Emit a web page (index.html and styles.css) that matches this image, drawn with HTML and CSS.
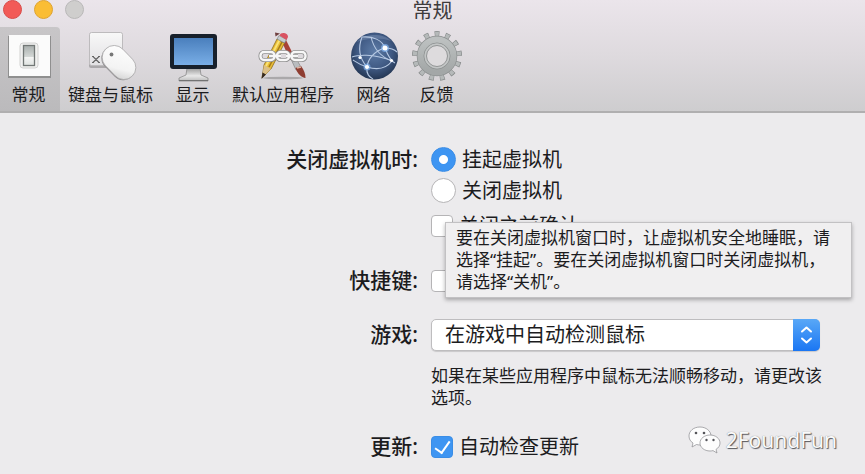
FILE: index.html
```html
<!DOCTYPE html>
<html lang="zh-CN">
<head>
<meta charset="utf-8">
<meta name="viewport" content="width=device-width, initial-scale=1">
<title>常规</title>
<link rel="stylesheet" href="styles.css">
</head>
<body>
<header class="header">
  <div class="titlebar">
    <div class="lights">
      <button class="light light-close" type="button" aria-label="关闭"></button>
      <button class="light light-min" type="button" aria-label="最小化"></button>
      <button class="light light-zoom" type="button" aria-label="缩放" disabled></button>
    </div>
    <h1 class="title">常规</h1>
  </div>
  <nav class="toolbar">
    <button class="tool tool-selected" type="button">
      <svg class="tool-icon" viewBox="0 0 52 52" aria-hidden="true">
        <defs>
          <linearGradient id="rocker" x1="0" y1="0" x2="0" y2="1"><stop offset="0" stop-color="#a9afae"/><stop offset=".55" stop-color="#d3d7d5"/><stop offset=".6" stop-color="#f4f5f4"/><stop offset="1" stop-color="#dfe2e0"/></linearGradient>
        </defs>
        <rect x="5" y="6" width="43" height="42" fill="#8f8f8f"/>
        <rect x="6" y="5" width="41" height="41" fill="#fbfbfb"/>
        <rect x="17" y="13" width="18" height="25" rx="3" fill="#f1f1f0" stroke="#d2d2d1"/>
        <rect x="20.500" y="15.500" width="11" height="20" fill="url(#rocker)" stroke="#727776" stroke-width="1.300"/>
      </svg>
      <span>常规</span>
    </button>
    <button class="tool" type="button">
      <svg class="tool-icon" viewBox="0 0 52 52" aria-hidden="true">
        <defs>
          <linearGradient id="key" x1="0" y1="0" x2="0" y2="1"><stop offset="0" stop-color="#f8f8f8"/><stop offset="1" stop-color="#e2e1e3"/></linearGradient>
          <linearGradient id="mouse" x1="0" y1="0" x2="1" y2="1"><stop offset="0" stop-color="#ffffff"/><stop offset=".65" stop-color="#f3f3f3"/><stop offset="1" stop-color="#c9c9c9"/></linearGradient>
        </defs>
        <rect x="4" y="4" width="34" height="34" rx="2" fill="#aaa8aa"/>
        <rect x="4.500" y="2.500" width="33" height="33" rx="2" fill="url(#key)" stroke="#bdbbbd"/>
        <path d="M8 26.500l6 6M14 26.500l-6 6M7 26.500h2M13 26.500h2M7 32.500h2M13 32.500h2" stroke="#686868" stroke-width="1.200" fill="none"/>
        <g transform="rotate(46 34 32.500)">
          <rect x="15" y="21.500" width="38" height="24" rx="12" fill="#8d8b8d"/>
          <rect x="15" y="20.500" width="38" height="24" rx="12" fill="url(#mouse)" stroke="#aaa9aa" stroke-width=".8"/>
        </g>
        <circle cx="26.500" cy="24.500" r="1.900" fill="#777"/>
      </svg>
      <span>键盘与鼠标</span>
    </button>
    <button class="tool" type="button">
      <svg class="tool-icon" viewBox="0 0 52 52" aria-hidden="true">
        <defs>
          <linearGradient id="screen" x1="0" y1="0" x2="0" y2="1"><stop offset="0" stop-color="#4a7fbd"/><stop offset="1" stop-color="#79aee6"/></linearGradient>
          <linearGradient id="stand" x1="0" y1="0" x2="0" y2="1"><stop offset="0" stop-color="#999"/><stop offset=".6" stop-color="#e8e8e8"/><stop offset="1" stop-color="#bbb"/></linearGradient>
        </defs>
        <path d="M20 38h13l1 7 7 3v3H12v-3l7-3z" fill="url(#stand)" stroke="#8b8b8b" stroke-width=".8"/>
        <path d="M12 50.500h29" stroke="#737373"/>
        <rect x="3" y="4" width="47" height="35" rx="3" fill="#17202b"/>
        <rect x="7" y="8" width="39" height="27" fill="url(#screen)"/>
      </svg>
      <span>显示</span>
    </button>
    <button class="tool" type="button">
      <svg class="tool-icon" viewBox="0 0 52 52" aria-hidden="true">
        <ellipse cx="26" cy="48" rx="20" ry="1.300" fill="#aaa8aa"/>
        <path d="M25 12l4-2 9 18-5 2z" fill="#a84238"/>
        <path d="M33 27l4-2 7 12-5 3z" fill="#b9bcbf" stroke="#777" stroke-width=".6"/>
        <path d="M38.500 38l5.500-2c3 4 4.500 8 4.500 12-4-.5-8-4-10-10z" fill="#8f3d31"/>
        <path d="M40 38l4-1" stroke="#deb6a5" stroke-width="1.500"/>
        <path d="M7 35L20 9l7.500 4L14 39 5 48z" fill="#e9bd37" stroke="#8a6b1c" stroke-width=".8"/>
        <path d="M12 37L25 12" stroke="#a47c1c" stroke-width="1.600"/>
        <path d="M9 36L22.500 10" stroke="#fae375" stroke-width="1.800"/>
        <path d="M7 35l7 4-9 9z" fill="#dcc087"/>
        <path d="M5.500 42.500l3.500 2L4.500 49z" fill="#352a20"/>
        <path d="M20 9l2-3.500 7.500 4-2 3.500z" fill="#c7ccce" stroke="#80888a" stroke-width=".7"/>
        <path d="M22.500 5.500c1-4 8.500-3 8.500 1.500l-1.500 3z" fill="#d95261"/>
        <path d="M18 2.500l5 1-4.500 3z" fill="#704040"/>
        <g fill="none" stroke="#8f8f8f" stroke-width="4">
          <rect x="3.500" y="22" width="14" height="8" rx="3.500"/><rect x="20" y="22" width="12" height="8" rx="3.500"/><rect x="34.500" y="22" width="14" height="8" rx="3.500"/><path d="M12 26h12M29 26h12"/>
        </g>
        <g fill="none" stroke="#f7f7f7" stroke-width="2.400">
          <rect x="3.500" y="22" width="14" height="8" rx="3.500"/><rect x="20" y="22" width="12" height="8" rx="3.500"/><rect x="34.500" y="22" width="14" height="8" rx="3.500"/><path d="M12 26h12M29 26h12"/>
        </g>
      </svg>
      <span>默认应用程序</span>
    </button>
    <button class="tool" type="button">
      <svg class="tool-icon" viewBox="0 0 52 52" aria-hidden="true">
        <defs>
          <radialGradient id="globe" cx=".5" cy=".4" r=".6"><stop offset="0" stop-color="#5d7ba6"/><stop offset=".6" stop-color="#405a84"/><stop offset="1" stop-color="#243653"/></radialGradient>
        </defs>
        <circle cx="26.500" cy="26" r="23.500" fill="url(#globe)"/>
        <path d="M9 12C16 3 36 3 43 11C33 7 19 8 9 12z" fill="#8ea4c4" opacity=".35"/>
        <g fill="none" stroke="#b7c9e3" stroke-width="1.100">
          <path d="M14 7c11-1 20 3 23 11s6 13 10 15"/>
          <path d="M37 18C26 21 20 29 19 37s3 10 6 12"/>
          <path d="M19 37C12 29 9 20 14 7"/>
          <path d="M4 27c5-2 20-4 41 4"/>
          <path d="M23 7c3 13 10 20 21 24-6 8-15 9-25 6-7-2-11-5-14-7M37 18c5 0 9 1 12 4"/>
        </g>
        <g fill="#8cc0ff" opacity=".6"><circle cx="37" cy="18" r="4"/><circle cx="19" cy="37" r="3.500"/></g>
        <g fill="#fff"><circle cx="37" cy="18" r="2.500"/><circle cx="19" cy="37" r="2.100"/><circle cx="12" cy="27.500" r="1.600"/><circle cx="43.500" cy="30.500" r="1.600"/></g>
      </svg>
      <span>网络</span>
    </button>
    <button class="tool" type="button">
      <svg class="tool-icon" viewBox="0 0 52 52" aria-hidden="true">
        <defs>
          <linearGradient id="gear" x1="0" y1="0" x2="0" y2="1"><stop offset="0" stop-color="#bcc0c0"/><stop offset="1" stop-color="#a3a7a7"/></linearGradient>
        </defs>
        <g fill="none">
          <circle cx="26" cy="26" r="21.500" stroke="#858989" stroke-width="7" pathLength="260" stroke-dasharray="9 11" transform="rotate(-96 26 26)"/>
          <circle cx="26" cy="26" r="21.500" stroke="#b5b9b9" stroke-width="5.600" pathLength="260" stroke-dasharray="7 13" stroke-dashoffset="-1" transform="rotate(-96 26 26)"/>
          <circle cx="26" cy="26" r="15.500" stroke="#8b8f8f" stroke-width="9.500"/>
          <circle cx="26" cy="26" r="15.500" stroke="url(#gear)" stroke-width="8.200"/>
          <circle cx="26" cy="26" r="13" stroke="#8f9393" stroke-width="1"/>
          <circle cx="26" cy="26" r="11.500" stroke="#c3c6c6" stroke-width="2"/>
          <circle cx="26" cy="26" r="10.500" fill="#dddbdd" stroke="#8b8f8f" stroke-width=".9"/>
        </g>
      </svg>
      <span>反馈</span>
    </button>
  </nav>
</header>

<main>
  <form class="form">
    <span class="label" id="close-label">关闭虚拟机时:</span>
    <div class="field close-field" role="group" aria-labelledby="close-label">
      <label class="option"><input class="radio" type="radio" name="close" checked>挂起虚拟机</label>
      <label class="option"><input class="radio" type="radio" name="close">关闭虚拟机</label>
      <label class="option option-confirm"><input class="check" type="checkbox">关闭之前确认</label>
      <div class="tooltip" role="tooltip">要在关闭虚拟机窗口时，让虚拟机安全地睡眠，请选择“挂起”。要在关闭虚拟机窗口时关闭虚拟机，请选择“关机”。</div>
    </div>

    <label class="label" for="shortcuts">快捷键:</label>
    <div class="field option"><input class="check" type="checkbox" id="shortcuts"></div>

    <label class="label label-games" for="games">游戏:</label>
    <div class="field">
      <div class="picker">
        <select class="select" id="games">
          <option>在游戏中自动检测鼠标</option>
        </select>
        <svg class="picker-arrows" viewBox="0 0 27 32" aria-hidden="true"><path d="M9 12.500l4.500-4 4.500 4M9 19.500l4.500 4 4.500-4" fill="none" stroke="#fff" stroke-width="2" stroke-linecap="round" stroke-linejoin="round"/></svg>
      </div>
      <p class="note">如果在某些应用程序中鼠标无法顺畅移动，请更改该选项。</p>
    </div>

    <span class="label" id="update-label">更新:</span>
    <div class="field" role="group" aria-labelledby="update-label">
      <label class="option"><input class="check" type="checkbox" checked>自动检查更新</label>
    </div>
  </form>
</main>

<div class="watermark">
  <svg class="watermark-icon" viewBox="0 0 34 30" aria-hidden="true">
    <g fill="#fdfdfd" stroke="#8a8a8e" stroke-width=".7">
      <path d="M12 2C5.500 2 1 6 1 11c0 3 1.500 5.500 4 7l-1 4 4.500-2.500c1.200.3 2.300.5 3.500.5 6 0 11-4 11-9S18 2 12 2z"/>
      <path d="M22 10c-5.500 0-10 3.500-10 8s4.500 8 10 8c1 0 2-.1 3-.4l4 2.400-1-3.600c2.500-1.500 4-3.800 4-6.400 0-4.500-4.500-8-10-8z"/>
    </g>
    <g fill="#55555a"><circle cx="8" cy="8" r="1.300"/><circle cx="16" cy="8" r="1.300"/><circle cx="18.500" cy="15" r="1.200"/><circle cx="25.500" cy="15" r="1.200"/></g>
  </svg>
  <span>2FoundFun</span>
</div>
</body>
</html>
```
FILE: styles.css
```css
* {
  box-sizing: border-box;
}

body {
  margin: 0;
  min-height: 100vh;
  overflow: hidden;
  background: #ecebed;
  color: #1c1c1e;
  font-family: "Noto Sans", "Noto Sans CJK SC", sans-serif;
  font-size: 20px;
  line-height: 30px;
}

button,
select {
  font: inherit;
  color: inherit;
}

.header {
  background: linear-gradient(#ebe5eb, #dedade 50%, #cecdcf);
  border-bottom: 2px solid #b0afb0;
}

.titlebar {
  display: grid;
  grid-template-columns: 1fr auto 1fr;
  height: 27px;
}

.lights {
  display: flex;
  gap: 12px;
  padding-left: 3px;
}

.light {
  width: 19px;
  height: 19px;
  padding: 0;
  border: 1px solid;
  border-radius: 50%;
}

.light-close {
  background: #f25a57;
  border-color: #d94b49;
}

.light-min {
  background: #fabd34;
  border-color: #dfa330;
}

.light-zoom {
  background: #cfcecd;
  border-color: #b9b8b8;
}

.title {
  margin: 0;
  font-size: 20px;
  font-weight: 400;
  line-height: 22px;
  color: #3d3b3d;
}

.toolbar {
  display: flex;
  margin-left: -3px;
}

.tool {
  display: flex;
  flex-direction: column;
  align-items: center;
  gap: 2px;
  min-width: 63px;
  padding: 3px 8px 5px;
  border: 0;
  background: none;
  font-size: 17px;
  line-height: 22px;
  white-space: nowrap;
}

.tool-selected {
  background: linear-gradient(#c8c6c8, #bbbabc);
  border-radius: 0 4px 0 0;
}

.tool-icon {
  width: 52px;
  height: 52px;
  margin: 0 -6px;
}

.form {
  display: grid;
  grid-template-columns: 418fr 434fr;
  column-gap: 13px;
  padding-top: 31px;
}

.label {
  text-align: right;
  font-size: 21px;
  font-weight: 500;
}

.label-games {
  padding-top: 23px;
}

.field {
  min-width: 0;
}

.close-field {
  position: relative;
  margin-bottom: 24px;
}

.option {
  display: flex;
  align-items: center;
  gap: 6px;
  height: 31px;
}

.option-confirm {
  margin-top: 4px;
}

.radio,
.check {
  appearance: none;
  flex: none;
  margin: 0;
  border: 1px solid #b5b4b6;
  background: #fff;
}

.radio {
  width: 25px;
  height: 25px;
  border-radius: 50%;
}

.radio:checked {
  border-color: #3a8de6;
  background: radial-gradient(circle, #fff 4px, #3e95f2 5px);
}

.check {
  width: 22px;
  height: 22px;
  border-radius: 4px;
}

.check:checked {
  display: grid;
  place-items: center;
  border-color: #3a8de6;
  background: #3e95f2;
}

.check:checked::before {
  content: "";
  width: 7px;
  height: 13px;
  margin-bottom: 3px;
  border: solid #fff;
  border-width: 0 2px 2px 0;
  transform: rotate(35deg);
}

.tooltip {
  position: absolute;
  top: 78px;
  left: 14px;
  right: 13px;
  padding: 4px 10px;
  border: 1px solid #c2c1c3;
  background: #f0eff0;
  box-shadow: 0 2px 4px rgba(0, 0, 0, 0.3);
  font-size: 17px;
  line-height: 22px;
}

.picker {
  position: relative;
  max-width: 389px;
  margin-top: 23px;
}

.select {
  display: block;
  width: 100%;
  height: 32px;
  padding: 0 30px 0 13px;
  appearance: none;
  border: 1px solid #bebdbf;
  border-radius: 5px;
  background: #fff;
  box-shadow: 0 1px 1px rgba(0, 0, 0, 0.15);
}

.picker-arrows {
  position: absolute;
  top: 0;
  right: 0;
  width: 27px;
  height: 32px;
  border-radius: 0 5px 5px 0;
  background: linear-gradient(#59a8f7, #1a76f3);
  pointer-events: none;
}

.note {
  margin: 14px 0 22px;
  padding-right: 30px;
  font-size: 17px;
  line-height: 22px;
}

.watermark {
  position: absolute;
  right: 28px;
  bottom: 19px;
  display: flex;
  align-items: center;
  gap: 4px;
  color: #fafafa;
  font-size: 21px;
  text-shadow: 1px 1px 1px #55555a, 0 0 1px #77777b;
}

.watermark-icon {
  width: 34px;
  height: 30px;
}
```
